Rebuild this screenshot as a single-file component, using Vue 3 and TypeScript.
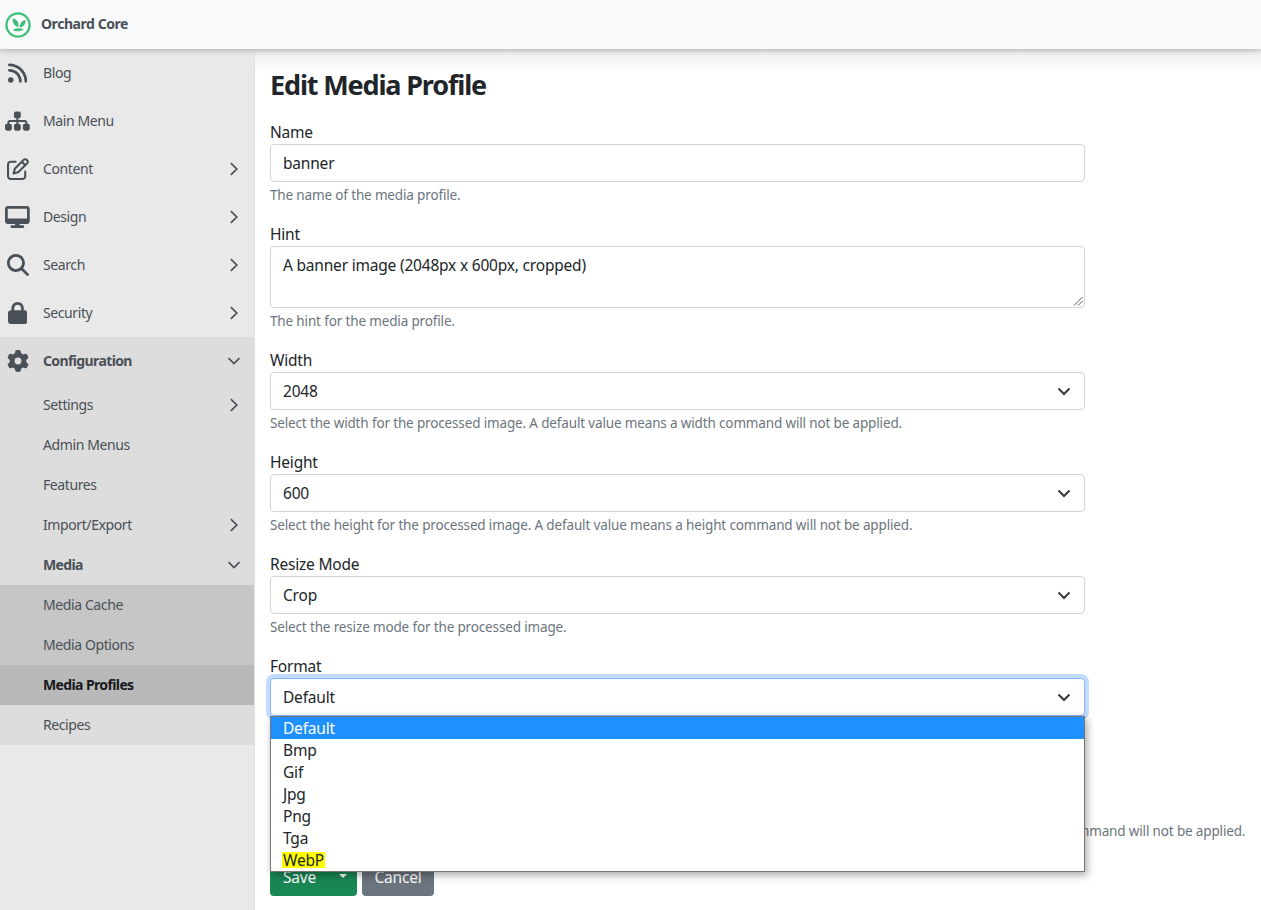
<script setup lang="ts">
interface NavItem { label: string; icon: string; box: string; chevron?: boolean }
const topItems: NavItem[] = [
  { label: 'Blog', icon: 'rss', box: '0 0 448 512' },
  { label: 'Main Menu', icon: 'sitemap', box: '0 0 576 512' },
  { label: 'Content', icon: 'edit', box: '0 0 512 512', chevron: true },
  { label: 'Design', icon: 'desktop', box: '0 0 576 512', chevron: true },
  { label: 'Search', icon: 'search', box: '0 0 512 512', chevron: true },
  { label: 'Security', icon: 'lock', box: '0 0 448 512', chevron: true },
]
const paths: Record<string, string> = {
  rss: 'M0 64C0 46.3 14.3 32 32 32c229.8 0 416 186.2 416 416c0 17.7-14.3 32-32 32s-32-14.3-32-32C384 253.6 226.4 96 32 96C14.3 96 0 81.7 0 64zM0 416a64 64 0 1 1 128 0A64 64 0 1 1 0 416zM32 160c159.1 0 288 128.9 288 288c0 17.7-14.3 32-32 32s-32-14.3-32-32c0-123.7-100.3-224-224-224c-17.7 0-32-14.3-32-32s14.3-32 32-32z',
  sitemap: 'M208 80c0-26.5 21.5-48 48-48h64c26.5 0 48 21.5 48 48v64c0 26.5-21.5 48-48 48h-8v40H464c30.9 0 56 25.1 56 56v32h8c26.5 0 48 21.5 48 48v64c0 26.5-21.5 48-48 48H464c-26.5 0-48-21.5-48-48V368c0-26.5 21.5-48 48-48h8V288c0-4.4-3.6-8-8-8H312v40h8c26.5 0 48 21.5 48 48v64c0 26.5-21.5 48-48 48H256c-26.5 0-48-21.5-48-48V368c0-26.5 21.5-48 48-48h8V280H112c-4.4 0-8 3.6-8 8v32h8c26.5 0 48 21.5 48 48v64c0 26.5-21.5 48-48 48H48c-26.5 0-48-21.5-48-48V368c0-26.5 21.5-48 48-48h8V288c0-30.9 25.1-56 56-56H264V192h-8c-26.5 0-48-21.5-48-48V80z',
  edit: 'M441 58.9L453.1 71c9.4 9.4 9.4 24.6 0 33.9L424 134.1 377.9 88 407 58.9c9.4-9.4 24.6-9.4 33.9 0zM209.8 256.2L344 121.9 390.1 168 255.8 302.2c-2.9 2.9-6.5 5-10.4 6.1l-58.5 16.7 16.7-58.5c1.1-3.9 3.2-7.5 6.1-10.4zM373.1 25L175.8 222.2c-8.7 8.7-15 19.4-18.3 31.1l-28.6 100c-2.4 8.4-.1 17.4 6.1 23.6s15.2 8.5 23.6 6.1l100-28.6c11.8-3.4 22.5-9.7 31.1-18.3L487 138.9c28.1-28.1 28.1-73.7 0-101.8L474.9 25C446.8-3.1 401.2-3.1 373.1 25zM88 64C39.4 64 0 103.4 0 152V424c0 48.6 39.4 88 88 88H360c48.6 0 88-39.4 88-88V312c0-13.3-10.7-24-24-24s-24 10.7-24 24V424c0 22.1-17.9 40-40 40H88c-22.1 0-40-17.9-40-40V152c0-22.1 17.9-40 40-40H200c13.3 0 24-10.7 24-24s-10.7-24-24-24H88z',
  desktop: 'M64 0C28.7 0 0 28.7 0 64V352c0 35.3 28.7 64 64 64H240l-10.7 32H160c-17.7 0-32 14.3-32 32s14.3 32 32 32H416c17.7 0 32-14.3 32-32s-14.3-32-32-32H346.7L336 416H512c35.3 0 64-28.7 64-64V64c0-35.3-28.7-64-64-64H64zM512 64V288H64V64H512z',
  search: 'M416 208c0 45.9-14.9 88.3-40 122.7L502.6 457.4c12.5 12.5 12.5 32.8 0 45.3s-32.8 12.5-45.3 0L330.7 376c-34.4 25.2-76.8 40-122.7 40C93.1 416 0 322.9 0 208S93.1 0 208 0S416 93.1 416 208zM208 352a144 144 0 1 0 0-288 144 144 0 1 0 0 288z',
  lock: 'M144 144v48H304V144c0-44.2-35.8-80-80-80s-80 35.8-80 80zM80 192V144C80 64.5 144.5 0 224 0s144 64.5 144 144v48h16c35.3 0 64 28.7 64 64V448c0 35.3-28.7 64-64 64H64c-35.3 0-64-28.7-64-64V256c0-35.3 28.7-64 64-64H80z',
  cog: 'M495.9 166.6c3.2 8.7 .5 18.4-6.4 24.6l-43.3 39.4c1.1 8.3 1.7 16.8 1.7 25.4s-.6 17.1-1.7 25.4l43.3 39.4c6.9 6.2 9.6 15.9 6.4 24.6c-4.4 11.9-9.7 23.3-15.8 34.3l-4.7 8.1c-6.6 11-14 21.4-22.1 31.2c-5.9 7.2-15.7 9.6-24.5 6.8l-55.7-17.7c-13.4 10.3-28.2 18.9-44 25.4l-12.5 57.1c-2 9.1-9 16.3-18.2 17.8c-13.8 2.3-28 3.5-42.5 3.5s-28.7-1.2-42.5-3.5c-9.2-1.5-16.2-8.7-18.2-17.8l-12.5-57.1c-15.8-6.5-30.6-15.1-44-25.4L83.1 425.9c-8.8 2.8-18.6 .3-24.5-6.8c-8.1-9.8-15.5-20.2-22.1-31.2l-4.7-8.1c-6.1-11-11.4-22.4-15.8-34.3c-3.2-8.7-.5-18.4 6.4-24.6l43.3-39.4C64.6 273.1 64 264.6 64 256s.6-17.1 1.7-25.4L22.4 191.2c-6.9-6.2-9.6-15.9-6.4-24.6c4.4-11.9 9.7-23.3 15.8-34.3l4.7-8.1c6.6-11 14-21.4 22.1-31.2c5.9-7.2 15.7-9.6 24.5-6.8l55.7 17.7c13.4-10.3 28.2-18.9 44-25.4l12.5-57.1c2-9.1 9-16.3 18.2-17.8C227.3 1.2 241.5 0 256 0s28.7 1.2 42.5 3.5c9.2 1.5 16.2 8.7 18.2 17.8l12.5 57.1c15.8 6.5 30.6 15.1 44 25.4l55.7-17.7c8.8-2.8 18.6-.3 24.5 6.8c8.1 9.8 15.5 20.2 22.1 31.2l4.7 8.1c6.1 11 11.4 22.4 15.8 34.3zM256 336a80 80 0 1 0 0-160 80 80 0 1 0 0 160z',
}
const subItems = [
  { label: 'Settings', chevron: true },
  { label: 'Admin Menus' },
  { label: 'Features' },
  { label: 'Import/Export', chevron: true },
]
const options = ['Default', 'Bmp', 'Gif', 'Jpg', 'Png', 'Tga', 'WebP']
const selects = [
  { label: 'Width', value: '2048', help: 'Select the width for the processed image. A default value means a width command will not be applied.' },
  { label: 'Height', value: '600', help: 'Select the height for the processed image. A default value means a height command will not be applied.' },
  { label: 'Resize Mode', value: 'Crop', help: 'Select the resize mode for the processed image.' },
]
</script>

<template>
  <div class="page">
    <header class="topbar">
      <svg class="logo" viewBox="0 0 26 26" width="26" height="26">
        <circle cx="13" cy="13" r="11.6" fill="#fff" stroke="#3fbf78" stroke-width="2.2" />
        <path d="M7.500 6.500C11.500 6.500 14 10 13.400 15 9.500 14.500 7.500 11 7.500 6.500Z" fill="#3fbf78" />
        <path d="M14.500 15.500C14.500 11.500 17 8.500 20.500 8 20.800 12 18.500 15 14.500 15.500Z" fill="#3fbf78" />
        <path d="M7.500 18C10.500 15.800 15 16 19 17 15.500 19.800 11 20 7.500 18Z" fill="#3fbf78" />
      </svg>
      <span class="brand">Orchard Core</span>
    </header>
    <div class="body">
      <nav class="sidebar">
        <a v-for="item in topItems" :key="item.label" class="nav-item">
          <span class="icon-cell">
            <svg class="nav-icon" :viewBox="item.box" :style="{ width: `${(Number(item.box.split(' ')[2]) / 512) * 22}px` }"><path :d="paths[item.icon]" /></svg>
          </span>
          <span class="nav-label">{{ item.label }}</span>
          <svg v-if="item.chevron" class="chev" viewBox="0 0 16 16"><path d="M4.800 2.200 10.800 8l-6 5.800" /></svg>
        </a>
        <div class="config">
          <a class="nav-item strong">
            <span class="icon-cell">
              <svg class="nav-icon" viewBox="0 0 512 512" style="width: 22px"><path :d="paths.cog" /></svg>
            </span>
            <span class="nav-label">Configuration</span>
            <svg class="chev" viewBox="0 0 16 16"><path d="M2.500 5.200 8 10.500l5.500-5.300" /></svg>
          </a>
          <a v-for="s in subItems" :key="s.label" class="sub-item">
            <span>{{ s.label }}</span>
            <svg v-if="s.chevron" class="chev" viewBox="0 0 16 16"><path d="M4.800 2.200 10.800 8l-6 5.800" /></svg>
          </a>
          <a class="sub-item strong">
            <span>Media</span>
            <svg class="chev" viewBox="0 0 16 16"><path d="M2.500 5.200 8 10.500l5.500-5.300" /></svg>
          </a>
          <div class="media-group">
            <a class="sub-item"><span>Media Cache</span></a>
            <a class="sub-item"><span>Media Options</span></a>
            <a class="sub-item strong current"><span>Media Profiles</span></a>
          </div>
          <a class="sub-item"><span>Recipes</span></a>
        </div>
      </nav>
      <main class="content">
        <h1>Edit Media Profile</h1>
        <div class="field">
          <label>Name</label>
          <div class="control">banner</div>
          <small>The name of the media profile.</small>
        </div>
        <div class="field tall">
          <label>Hint</label>
          <div class="control area">
            A banner image (2048px x 600px, cropped)
            <svg class="grip" viewBox="0 0 10 10" width="10" height="10"><path d="M9.500 1 1 9.500M9.500 5 5 9.500" /></svg>
          </div>
          <small>The hint for the media profile.</small>
        </div>
        <div v-for="f in selects" :key="f.label" class="field">
          <label>{{ f.label }}</label>
          <div class="control select">
            {{ f.value }}
            <svg class="caret" viewBox="0 0 16 16" width="16" height="16"><path d="m2.500 5.500 5.500 5.500 5.500-5.500" /></svg>
          </div>
          <small>{{ f.help }}</small>
        </div>
        <div class="field format">
          <label>Format</label>
          <div class="control select focus">
            Default
            <svg class="caret" viewBox="0 0 16 16" width="16" height="16"><path d="m2.500 5.500 5.500 5.500 5.500-5.500" /></svg>
          </div>
          <ul class="dropdown">
            <li v-for="(o, i) in options" :key="o" :class="{ selected: i === 0 }">
              <mark v-if="o === 'WebP'">{{ o }}</mark>
              <template v-else>{{ o }}</template>
            </li>
          </ul>
        </div>
        <div class="field">
          <div class="hidden-row"></div>
          <small class="long">Select the quality for the processed image, between 1 and 100, for the formats which support it. A default value means a quality command will not be applied.</small>
        </div>
        <div class="actions">
          <button class="btn save">Save<span class="tri"></span></button>
          <button class="btn cancel">Cancel</button>
        </div>
      </main>
    </div>
  </div>
</template>

<style>
html, body { margin: 0; padding: 0; background: #fff; }
</style>

<style scoped>
.page {
  height: 910px;
  overflow: hidden;
  display: flex;
  flex-direction: column;
  font-family: "Noto Sans", "Open Sans", sans-serif;
  color: #212529;
}
.topbar {
  height: 49px;
  flex: none;
  display: flex;
  align-items: center;
  background: #f8f9fa;
  box-shadow: 0 1px 6px rgba(0, 0, 0, .28);
  position: relative;
  z-index: 2;
  padding-left: 5px;
  box-sizing: border-box;
}
.logo { flex: none; margin-right: 10px; }
.brand { font-weight: 700; font-size: 14px; color: #495057; letter-spacing: -.45px; padding-bottom: 3px; }
.body { flex: 1; display: flex; min-height: 0; }
.sidebar {
  width: 255px;
  flex: none;
  box-sizing: border-box;
  background: #e9e9e9;
  border-right: 1px solid #dee2e6;
  font-size: 14px;
  color: #495057;
}
.nav-item {
  height: 48px;
  display: flex;
  align-items: center;
  padding-right: 12px;
}
.icon-cell { width: 35px; flex: none; margin-right: 8px; display: flex; justify-content: center; }
.nav-icon { height: 22px; fill: #495057; display: block; }
.nav-label { flex: 1; letter-spacing: -.4px; padding-bottom: 2px; }
.chev { width: 16px; height: 16px; fill: none; stroke: #495057; stroke-width: 1.7; flex: none; }
.strong { font-weight: 700; }
.strong .nav-label, .strong > span { letter-spacing: -.62px; }
.config { background: #ddd; }
.sub-item {
  height: 40px;
  display: flex;
  align-items: center;
  justify-content: space-between;
  padding: 0 12px 0 43px;
  letter-spacing: -.4px;
}
.sub-item > span { padding-bottom: 2px; }
.media-group { background: #c6c6c6; }
.current { background: #b9b9b9; color: #16181b; }
.content { flex: 1; min-width: 0; padding: 0 0 0 15px; position: relative; }
.content::before {
  content: "";
  position: absolute;
  left: 0;
  right: 0;
  top: 0;
  height: 24px;
  background: linear-gradient(#ededed, #fff);
}
h1 {
  position: relative;
  margin: 0 0 16px;
  padding-top: 17px;
  height: 38px;
  line-height: 38px;
  font-size: 27px;
  font-weight: 700;
  letter-spacing: -1.15px;
}
.field { height: 102px; width: 815px; position: relative; font-size: 15.5px; }
.tall { height: 126px; }
label { display: block; height: 24px; line-height: 24px; letter-spacing: -.2px; }
.hidden-row { height: 62px; }
.control {
  position: relative;
  box-sizing: border-box;
  height: 38px;
  line-height: 36px;
  border: 1px solid #ced4da;
  border-radius: 4px;
  padding: 0 12px;
  background: #fff;
  letter-spacing: -.2px;
}
.area { height: 62px; line-height: 1.5; padding-top: 7px; }
.grip { position: absolute; right: 1px; bottom: 1px; fill: none; stroke: #555; stroke-width: 1; }
.caret { position: absolute; right: 12px; top: 10px; fill: none; stroke: #343a40; stroke-width: 2; }
.focus { border-color: #86b7fe; box-shadow: 0 0 0 4px #c2dbfe; }
small {
  display: block;
  margin-top: 4px;
  font-size: 13.5px;
  line-height: 18px;
  color: #6c757d;
  white-space: nowrap;
  letter-spacing: -.15px;
}
.dropdown {
  list-style: none;
  margin: 0;
  padding: 0;
  position: absolute;
  z-index: 3;
  left: 0;
  top: 62px;
  background: #fff;
  border: 1px solid #767676;
  box-shadow: 2px 3px 8px rgba(0, 0, 0, .35);
  box-sizing: border-box;
  width: 815px;
}
.dropdown li {
  height: 22px;
  line-height: 22px;
  padding-left: 12px;
  letter-spacing: -.2px;
}
.selected { background: #1e90ff; color: #fff; }
mark { display: inline-block; background: #ffff00; color: inherit; height: 16px; line-height: 16px; padding: 0 1px; margin-left: -1px; vertical-align: 0; }
.actions { display: flex; gap: 5px; position: relative; }
.btn {
  height: 38px;
  border: 0;
  border-radius: 4px;
  color: #fff;
  font: inherit;
  font-size: 15.5px;
  letter-spacing: -.2px;
  padding: 0;
}
.save { width: 87px; background: #198754; position: relative; text-align: left; padding-left: 13px; }
.tri {
  position: absolute;
  right: 10px;
  top: 16px;
  border-left: 4.5px solid transparent;
  border-right: 4.5px solid transparent;
  border-top: 4.5px solid #fff;
}
.cancel { width: 72px; background: #6c757d; }
</style>
